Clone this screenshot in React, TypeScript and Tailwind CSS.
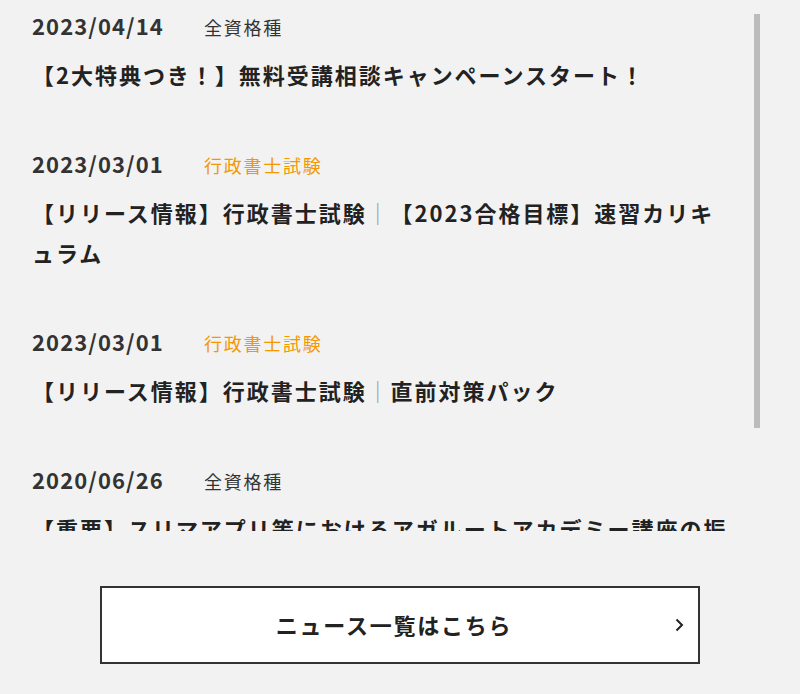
const NEWS = [
  {
    date: "2023/04/14",
    category: "全資格種",
    accent: false,
    title: ["【2大特典つき！】無料受講相談キャンペーンスタート！"],
  },
  {
    date: "2023/03/01",
    category: "行政書士試験",
    accent: true,
    title: ["【リリース情報】行政書士試験", "【2023合格目標】速習カリキュラム"],
  },
  {
    date: "2023/03/01",
    category: "行政書士試験",
    accent: true,
    title: ["【リリース情報】行政書士試験", "直前対策パック"],
  },
  {
    date: "2020/06/26",
    category: "全資格種",
    accent: false,
    title: ["【重要】スリマアプリ等におけるアガルートアカデミー講座の振替について"],
  },
];

function NewsItem({ item }: { item: (typeof NEWS)[number] }) {
  return (
    <li className="flex flex-col gap-[14px]">
      <div className="flex items-baseline gap-[40px] h-[30px]">
        <span className="text-[22px] leading-[30px] font-bold tracking-[0.05em] text-[#333]">
          {item.date}
        </span>
        <span
          className={`text-[18px] leading-[30px] tracking-[0.1em] ${
            item.accent ? "text-[#f39800]" : "text-[#333]"
          }`}
        >
          {item.category}
        </span>
      </div>
      <p className="text-[22px] leading-[40px] font-bold tracking-[0.09em] text-[#222]">
        {item.title.map((part, i) => (
          <span key={i}>
            {i > 0 && <span className="font-normal text-[#999]">｜</span>}
            {part}
          </span>
        ))}
      </p>
    </li>
  );
}

export default function App() {
  return (
    <div
      className="w-[800px] h-[694px] bg-[#f2f2f2] overflow-hidden"
      style={{ fontFamily: "'Noto Sans CJK JP', 'Noto Sans', sans-serif" }}
    >
      {/* scrolling news list */}
      <div className="relative h-[531px] overflow-hidden">
        <ul className="w-[732px] pl-[32px] pt-[10px] flex flex-col gap-[54px]">
          {NEWS.map((item, i) => (
            <NewsItem key={i} item={item} />
          ))}
        </ul>
        <div className="absolute left-[754px] top-[14px] w-[6px] h-[414px] bg-[#bcbcbc]" />
      </div>

      {/* link to the full list */}
      <div className="flex justify-center mt-[55px]">
        <a className="relative flex items-center justify-center w-[600px] h-[78px] pr-[12px] pb-[2px] border-2 border-[#333] bg-white text-[22px] font-bold tracking-[0.08em] text-[#222]">
          ニュース一覧はこちら
          <svg
            className="absolute right-[14px] top-1/2 -translate-y-1/2"
            width="10"
            height="16"
            viewBox="0 0 10 16"
            fill="none"
            stroke="#222"
            strokeWidth="2"
          >
            <path d="M2.5 2.5 L8 8 L2.5 13.5" />
          </svg>
        </a>
      </div>
    </div>
  );
}
